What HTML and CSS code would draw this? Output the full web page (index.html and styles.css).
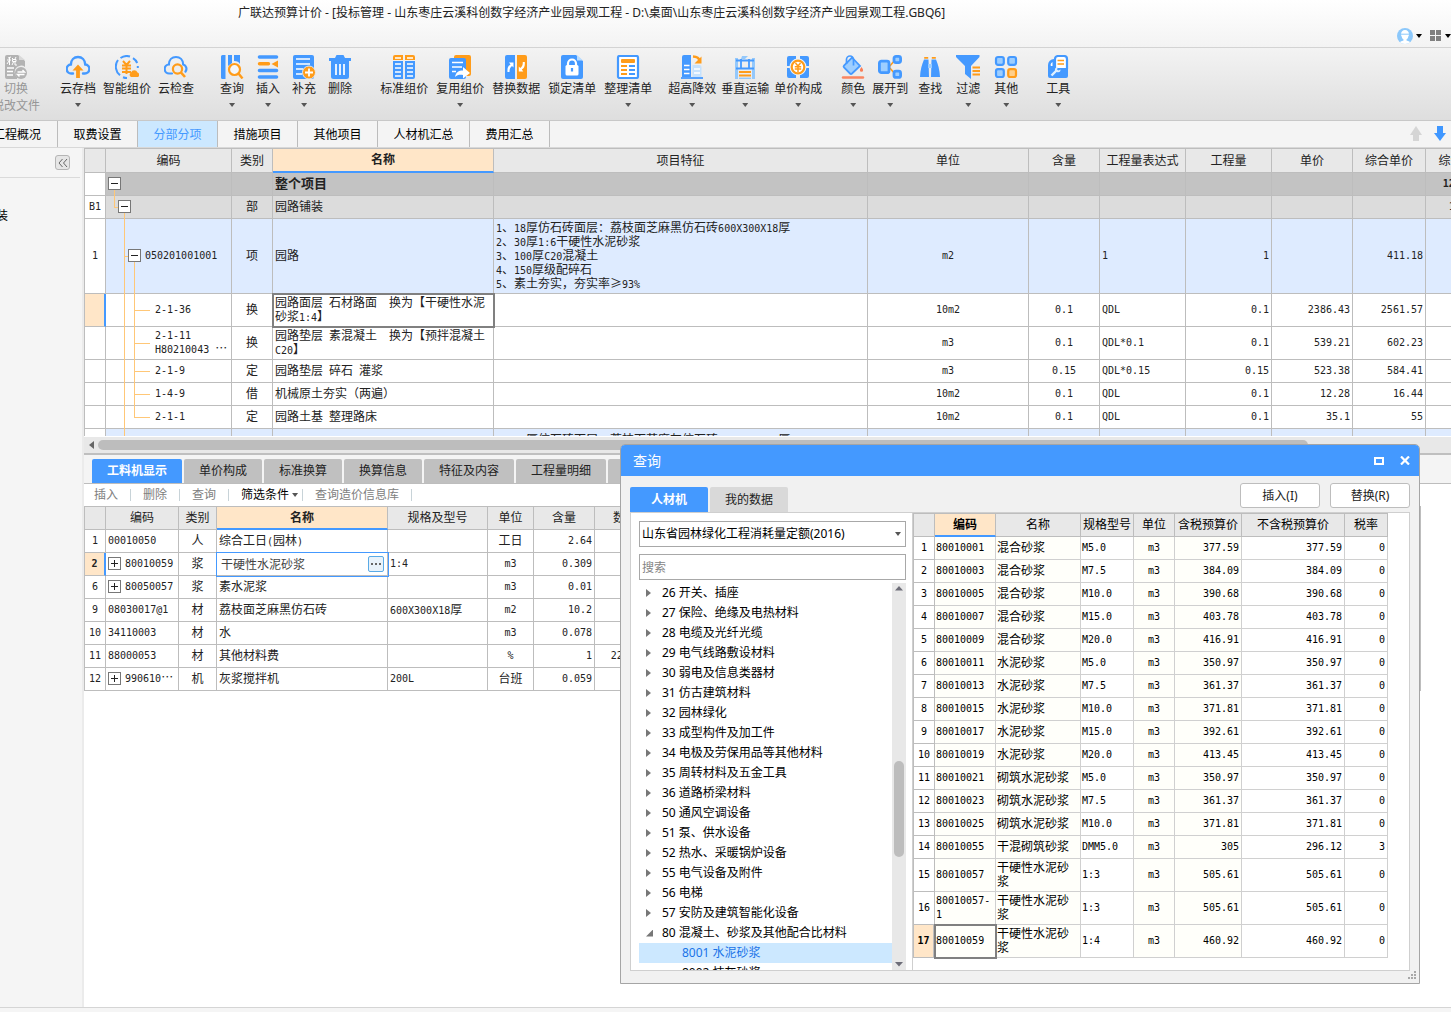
FILE: index.html
```html
<!DOCTYPE html>
<html lang="zh-CN">
<head>
<meta charset="utf-8">
<title>广联达预算计价</title>
<link rel="stylesheet" href="styles.css">
</head>
<body>
<div class="app">
  <header class="titlebar">
    <h1 class="app-title">广联达预算计价 - [投标管理 - 山东枣庄云溪科创数字经济产业园景观工程 - D:\桌面\山东枣庄云溪科创数字经济产业园景观工程.GBQ6]</h1>
    <div class="title-tools">
      <button class="bare" aria-label="用户"><svg width="16" height="16" viewBox="0 0 16 16"><defs><clipPath id="av"><circle cx="8" cy="8" r="8"/></clipPath></defs><g clip-path="url(#av)"><rect width="16" height="16" fill="#8cc8fb"/><path d="M4 6.500c0-3 1.600-4.500 4-4.500s4 1.500 4 4.500c0 1-.6 1.500-.8 2.500-.4 1.500-1.200 2-1.700 2.500v1c2 .5 4 1 4.500 3.500H2c.5-2.500 2.500-3 4.500-3.500v-1C6 11 5.200 10.500 4.800 9 4.600 8 4 7.500 4 6.500z" fill="#fff"/><path d="M4 6.200h8" stroke="#8cc8fb" stroke-width="1"/></g></svg></button>
      <i class="caret dark"></i>
      <button class="bare grid-btn" aria-label="布局"><svg width="12" height="12" viewBox="0 0 12 12" fill="#808080"><path d="M0 0h5v5H0zM6 0h5v5H6zM0 6h5v5H0zM6 6h5v5H6z"/></svg></button>
      <i class="caret dark"></i>
    </div>
  </header>

  <div class="ribbon">
    <div class="group first">
      <button class="tool off"><svg viewBox="0 0 24 24"><path d="M3 0h11l7 6v6a6 6 0 0 0-8 10v2H3a2 2 0 0 1-2-2V2a2 2 0 0 1 2-2z" fill="#b3b3b3"/><path d="M15 0l6 5h-6z" fill="#d9d9d9"/><path d="M4 3l3-1M3 5h4M5.500 3v7M5 6l-2 3M8 3l1 1M12 2l-1 2M8.500 4.500h3.500v2H8.500zM9.500 7l-1.500 3M11 7v3h2" fill="none" stroke="#fff"/><path d="M3 13h7M3 16.500h6M3 20h6" stroke="#fff" stroke-width="1.500"/><circle cx="17" cy="18" r="6" fill="#b3b3b3"/><path d="M13.500 17h7l-2-2M20.500 19.500h-7l2 2" stroke="#fff" stroke-width="1.400" fill="none"/></svg><span>切换<br>税改文件</span></button>
    </div>
    <div class="group g-a">
      <button class="tool"><svg viewBox="0 0 24 24"><path d="M7 18.500H5.500a4.500 4.500 0 0 1-.6-9C5 5 8 2 12 2s7 3 7.200 7.500a4.500 4.500 0 0 1-.7 9H17" fill="none" stroke="#4499ff" stroke-width="2.400" stroke-linecap="round"/><path d="M12 9.500l5.500 6h-3.600V23h-3.800v-7.500H6.500z" fill="#ff9c1a"/></svg><span>云存档</span><i class="caret"></i></button>
      <button class="tool"><svg viewBox="0 0 24 24"><path d="M5 20.200A11 11 0 0 1 3 5M5.500 3A11 11 0 0 1 15 1.500M18 3.200A11 11 0 0 1 22.200 8M22.800 11v2M8 22.200a11 11 0 0 0 4 .8" fill="none" stroke="#4499ff" stroke-width="2"/><path d="M8 6l3.500 4L15 6M7 10.500h9M7 13.500h9M7 17h9M11.500 10v9" fill="none" stroke="#ff9c1a" stroke-width="2"/><path d="M16 22a2.500 2.500 0 0 1 0-4.500 3.500 3.500 0 0 1 6.500 0A2.500 2.500 0 0 1 23 22z" fill="#ff9c1a"/></svg><span>智能组价</span></button>
      <button class="tool"><svg viewBox="0 0 24 24"><path d="M8 18.500H5.500a4.500 4.500 0 0 1-.6-9C5 5 8 2 12 2s7 3 7.200 7.500a4.500 4.500 0 0 1 2.300 7" fill="none" stroke="#4499ff" stroke-width="2.200" stroke-linecap="round"/><circle cx="13.500" cy="14" r="4.600" fill="none" stroke="#ff9c1a" stroke-width="2.200"/><path d="M17 17.500l4 4.500" stroke="#ff9c1a" stroke-width="2.600"/></svg><span>云检查</span></button>
    </div>
    <div class="group g-b">
      <button class="tool"><svg viewBox="0 0 24 24"><path d="M1 1.500A1.500 1.500 0 0 1 2.500 0h3v24h-3A1.500 1.500 0 0 1 1 22.500zM8 0h4v8l-4 3zM14 0h6v9c-1-2-3-3-6-3z" fill="#4499ff"/><circle cx="14.500" cy="14.500" r="5.500" fill="#f4f7fb" stroke="#ff9c1a" stroke-width="2.200"/><path d="M18.500 18.500l4 5" stroke="#ff9c1a" stroke-width="2.400"/></svg><span>查询</span><i class="caret"></i></button>
      <button class="tool"><svg viewBox="0 0 24 24"><path d="M3.500 2h17M3.500 15.500h17M3.500 22h17" stroke="#4499ff" stroke-width="3.600" stroke-linecap="round"/><path d="M3.500 8.800h9" stroke="#ff9c1a" stroke-width="3.400" stroke-linecap="round"/><path d="M22 5.500v7L15.500 9z" fill="#ff9c1a"/></svg><span>插入</span><i class="caret"></i></button>
      <button class="tool"><svg viewBox="0 0 24 24"><rect x="1" width="21" height="24" rx="2" fill="#4499ff"/><path d="M4 4h14M4 9h14M4 14h7M4 19h6" stroke="#fff" stroke-width="1.600"/><circle cx="17" cy="17.500" r="6.500" fill="#ff9c1a" stroke="#e9e9e9"/><path d="M17 13.500v8M13 17.500h8" stroke="#fff" stroke-width="1.800"/></svg><span>补充</span><i class="caret"></i></button>
      <button class="tool"><svg viewBox="0 0 24 24"><path d="M1 3h6l1.500-3h7L17 3h6v3H1z" fill="#4499ff"/><path d="M3 6h18v15.500a2.500 2.500 0 0 1-2.500 2.500h-13A2.500 2.500 0 0 1 3 21.500z" fill="#4499ff"/><path d="M8 9v11M12 9v11M16 9v11" stroke="#fff" stroke-width="1.700"/></svg><span>删除</span></button>
    </div>
    <div class="group g-c">
      <button class="tool"><svg viewBox="0 0 24 24"><path d="M1 6h10v18H3a2 2 0 0 1-2-2zM13 6h10v16a2 2 0 0 1-2 2h-8z" fill="#4499ff"/><path d="M3 0h8v5H1V2a2 2 0 0 1 2-2zM13 0h8a2 2 0 0 1 2 2v3H13z" fill="#ff9c1a"/><path d="M3 3h6M15 3h6M3 9h6M15 9h6M3 13h6M15 13h6M3 17h6M15 17h6M3 21h6M15 21h6" stroke="#fff" stroke-width="1.600"/></svg><span>标准组价</span></button>
      <button class="tool"><svg viewBox="0 0 24 24"><rect x="6" width="17" height="21" rx="2" fill="#ff9c1a"/><rect x="1" y="3" width="17" height="21" rx="2" fill="#4499ff"/><path d="M4 7.500h11M4 12h10M4 16.500h4" stroke="#fff" stroke-width="1.600"/><path d="M7 22c1-5 3.500-6.500 8-6.500V12l7 6-7 5.500V20c-3.500-.4-6 0-8 2z" fill="#fff"/></svg><span>复用组价</span><i class="caret"></i></button>
      <button class="tool"><svg viewBox="0 0 24 24"><path d="M3 0h8v24H3a2 2 0 0 1-2-2V2a2 2 0 0 1 2-2z" fill="#4499ff"/><path d="M13 0h8a2 2 0 0 1 2 2v20a2 2 0 0 1-2 2h-8z" fill="#ff9c1a"/><path d="M3.500 17c-.3-4 .5-6 3-7.500L5 7.500h4.500v5L8 11c-2 1.500-2.500 3-2.500 6zM20.800 7c.3 4-.5 6-3 7.500l1.500 2h-4.500v-5l1.500 1.500c2-1.500 2.500-3 2.500-6z" fill="#fff"/></svg><span>替换数据</span></button>
      <button class="tool"><svg viewBox="0 0 24 24"><path d="M3 0h13l7 6v16a2 2 0 0 1-2 2H3a2 2 0 0 1-2-2V2a2 2 0 0 1 2-2z" fill="#4499ff"/><path d="M17 0l6 5.500h-6z" fill="#b9dcff"/><path d="M8 11V8.500a4 4 0 0 1 8 0V11" fill="none" stroke="#fff" stroke-width="2.200"/><rect x="5.500" y="10" width="13" height="10.500" rx="1.500" fill="#fff"/><path d="M12 13v3.500" stroke="#4499ff" stroke-width="2.200"/></svg><span>锁定清单</span></button>
      <button class="tool"><svg viewBox="0 0 24 24"><rect x="2" y="1" width="20" height="22" rx="1.500" fill="#fff" stroke="#4499ff" stroke-width="2.200"/><rect x="5" y="4" width="14" height="4" rx="1" fill="#ff9c1a"/><path d="M5 11h6M5 15h6M5 19h6" stroke="#ff9c1a" stroke-width="2"/><path d="M13 11h6M13 15h6M13 19h6" stroke="#4499ff" stroke-width="2"/></svg><span>整理清单</span><i class="caret"></i></button>
    </div>
    <div class="group g-d">
      <button class="tool"><svg viewBox="0 0 24 24"><path d="M2 2a2 2 0 0 1 2-2h7v22H2z" fill="#4499ff"/><path d="M4 10.500h5.500M4 14.500h5.500M4 18.500h5.500" stroke="#fff" stroke-width="1.500"/><path d="M12.500 10h7a2 2 0 0 1 2 2v10h-9z" fill="#c6e2fd"/><path d="M14 14h6M14 18h6" stroke="#fff" stroke-width="1.300"/><path d="M1 23h22" stroke="#4499ff" stroke-width="1.800"/><path d="M13 1.500c4 .2 6 1.500 6.500 4" fill="none" stroke="#ff9c1a" stroke-width="2.600"/><path d="M21.500 1.500V8.500H14.500z" fill="#ff9c1a"/></svg><span>超高降效</span><i class="caret"></i></button>
      <button class="tool"><svg viewBox="0 0 24 24"><path d="M3.500 3v21M20.500 3v21" stroke="#94c8fb" stroke-width="3"/><path d="M3 5.500h18M3 13.500h18M8 4v10M16 4v10" stroke="#4499ff" stroke-width="1.800" fill="none"/><path d="M8 4l1-3 6 0-3 3z" fill="#94c8fb"/><path d="M6 17h12M6 20.500h12" stroke="#ff9c1a" stroke-width="2"/><path d="M6 23.300h12" stroke="#94c8fb" stroke-width="1.400"/></svg><span>垂直运输</span><i class="caret"></i></button>
      <button class="tool"><svg viewBox="0 0 24 24"><path d="M3 1h7v10H1V3a2 2 0 0 1 2-2zM14 1h7a2 2 0 0 1 2 2v8h-9zM1 13h9v10H3a2 2 0 0 1-2-2zM14 13h9v8a2 2 0 0 1-2 2h-7z" fill="#4499ff"/><circle cx="12" cy="12" r="8.500" fill="#e9f3fd"/><circle cx="12" cy="12" r="6.300" fill="#fff" stroke="#ff9c1a" stroke-width="2.200"/><path d="M9.500 8l2.500 3 2.500-3M8.800 11.700h6.400M8.800 14h6.400M12 11v6" fill="none" stroke="#ff9c1a" stroke-width="1.500"/></svg><span>单价构成</span><i class="caret"></i></button>
    </div>
    <div class="group g-e">
      <button class="tool"><svg viewBox="0 0 24 24"><path d="M11 2.500l8 8.500-8 7.500a1.500 1.500 0 0 1-2 0l-6-6a1.500 1.500 0 0 1 0-2z" fill="#9dceff" stroke="#4499ff" stroke-width="1.800"/><path d="M5.500 9V4.500a3.500 3.500 0 0 1 7 0v6" fill="none" stroke="#4499ff" stroke-width="1.700"/><path d="M20.500 12c1.300 2 1.600 2.600 1.600 3.200a1.600 1.600 0 0 1-3.200 0c0-.6.300-1.200 1.600-3.200z" fill="#fa7d55"/><path d="M2 22.500h20" stroke="#fa8560" stroke-width="2.400" stroke-linecap="round"/></svg><span>颜色</span><i class="caret"></i></button>
      <button class="tool"><svg viewBox="0 0 24 24"><path d="M11 12l6-7M11 12l6 7" stroke="#ff9c1a" stroke-width="1.600"/><g fill="#9dceff" stroke="#4499ff" stroke-width="2.800"><rect x="1.400" y="6.200" width="9.600" height="11.500" rx="2"/><rect x="16" y="1.400" width="6.600" height="6.200" rx="2"/><rect x="16" y="16.200" width="6.600" height="6.200" rx="2"/></g></svg><span>展开到</span><i class="caret"></i></button>
    </div>
    <div class="group g-f">
      <button class="tool"><svg viewBox="0 0 24 24"><path d="M6 4.500h4.500L11 22H2C2.300 15 4 9 6 4.500zM18 4.500h-4.500L13 22h9c-.3-7-2-13-4-17.500z" fill="#4499ff"/><path d="M10 9h4v4h-4z" fill="#9dceff"/><path d="M6.200 2.800h4M13.800 2.800h4" stroke="#ff9c1a" stroke-width="1.800"/></svg><span>查找</span></button>
      <button class="tool"><svg viewBox="0 0 24 24"><path d="M0 0h23.500v2l-8.500 9v13l-6-5v-8L0 2z" fill="#4499ff"/><path d="M16.500 12.500H24M16.500 16H24M16.500 19.500H24" stroke="#ff9c1a" stroke-width="1.800"/></svg><span>过滤</span><i class="caret"></i></button>
      <button class="tool"><svg viewBox="0 0 24 24"><g fill="#9dceff" stroke="#4499ff" stroke-width="2.200"><rect x="2" y="2" width="7.800" height="7.800" rx="2"/><rect x="14.200" y="2" width="7.800" height="7.800" rx="2"/><rect x="2" y="14.200" width="7.800" height="7.800" rx="2"/></g><rect x="14.200" y="14.200" width="7.800" height="7.800" rx="2" fill="#ffcf8a" stroke="#ff9c1a" stroke-width="2.200"/></svg><span>其他</span><i class="caret"></i></button>
    </div>
    <div class="group g-g">
      <button class="tool"><svg viewBox="0 0 24 24"><path d="M9 13V4a3 3 0 0 1 3-3h6a3 3 0 0 1 3 3v10" fill="#fff" stroke="#4499ff" stroke-width="2.200"/><path d="M2 21V10a6 6 0 0 1 6-6v9h14v8a2 2 0 0 1-2 2H4a2 2 0 0 1-2-2z" fill="#4499ff"/><path d="M4.500 10a4 4 0 0 1 2-3v4H5z" fill="#fff"/><path d="M11.500 5.500h6.500M11.500 9h6.500" stroke="#ff9c1a" stroke-width="1.700"/><path d="M5.500 20.500l5-5" stroke="#dff0ff" stroke-width="2.400"/><path d="M9 16c-.5-3 1-4 3-4l-1 2.500 1.500 1 2-1c.3 2.500-2 4-5.500 1.500z" fill="#dff0ff"/></svg><span>工具</span><i class="caret"></i></button>
    </div>
  </div>

  <nav class="page-tabs">
    <a href="#" class="cut">工程概况</a><a href="#">取费设置</a><a href="#" class="on">分部分项</a><a href="#">措施项目</a><a href="#">其他项目</a><a href="#" class="wide">人材机汇总</a><a href="#">费用汇总</a>
    <div class="move">
      <button class="bare" aria-label="上移"><svg width="12" height="16" viewBox="0 0 12 16"><path d="M6 0l6 9H9v6H3V9H0z" fill="#d5d5d5"/></svg></button>
      <button class="bare" aria-label="下移"><svg width="12" height="16" viewBox="0 0 12 16"><path d="M6 15l6-8H9V0H3v7H0z" fill="#3f97ff"/></svg></button>
    </div>
  </nav>

  <main class="work">
    <aside class="side">
      <div class="side-head"><button class="collapse" aria-label="收起"><svg width="10" height="8" viewBox="0 0 10 8"><path d="M4.500 0L1 4l3.500 4M9 0L5.500 4 9 8" fill="none" stroke="#666"/></svg></button></div>
      <div class="side-item"><span>园路铺装</span></div>
    </aside>

    <section class="panes">
      <div class="main-pane">
        <table class="grid main-grid">
          <colgroup><col class="w21"><col class="w126"><col class="w41"><col class="w221"><col class="w374"><col class="w161"><col class="w71"><col class="w86"><col class="w86"><col class="w81"><col class="w73"><col class="w74"></colgroup>
          <thead><tr><th></th><th>编码</th><th>类别</th><th class="cur">名称</th><th>项目特征</th><th>单位</th><th>含量</th><th>工程量表达式</th><th>工程量</th><th>单价</th><th>综合单价</th><th>综合合价</th></tr></thead>
          <tbody>
            <tr class="root"><td class="no"></td><td class="tree"><button class="box minus b1" aria-label="折叠"></button><i class="v x1 low"></i></td><td></td><td class="big">整个项目</td><td></td><td></td><td></td><td></td><td></td><td></td><td></td><td class="r n strong">120358.36</td></tr>
            <tr class="part"><td class="no n">B1</td><td class="tree"><i class="v x1 up"></i><i class="h x1"></i><button class="box minus b2" aria-label="折叠"></button><i class="v x2 low"></i></td><td class="c">部</td><td>园路铺装</td><td></td><td></td><td></td><td></td><td></td><td></td><td></td><td class="r n">14062.58</td></tr>
            <tr class="item tall"><td class="no n">1</td><td class="tree n t3"><i class="v x2"></i><i class="h x2"></i><button class="box minus b3" aria-label="折叠"></button><i class="v x3 low"></i>050201001001</td><td class="c">项</td><td>园路</td><td><span class="n">1</span>、<span class="n">18</span>厚仿石砖面层：荔枝面芝麻黑仿石砖<span class="n">600X300X18</span>厚<br><span class="n">2</span>、<span class="n">30</span>厚<span class="n">1:6</span>干硬性水泥砂浆<br><span class="n">3</span>、<span class="n">100</span>厚<span class="n">C20</span>混凝土<br><span class="n">4</span>、<span class="n">150</span>厚级配碎石<br><span class="n">5</span>、素土夯实，夯实率≥<span class="n">93%</span></td><td class="c n">m2</td><td></td><td class="n">1</td><td class="r n">1</td><td></td><td class="r n">411.18</td><td></td></tr>
            <tr class="two"><td class="no pick"></td><td class="tree n t4"><i class="v x2"></i><i class="v x3"></i><i class="h x3"></i>2-1-36</td><td class="c">换</td><td class="focus">园路面层<span class="n"> </span>石材路面<span class="n">&nbsp; </span>换为【干硬性水泥砂浆<span class="n">1:4</span>】</td><td></td><td class="c n">10m2</td><td class="c n">0.1</td><td class="n">QDL</td><td class="r n">0.1</td><td class="r n">2386.43</td><td class="r n">2561.57</td><td></td></tr>
            <tr class="two"><td class="no"></td><td class="tree n t4"><i class="v x2"></i><i class="v x3"></i><i class="h x3"></i>2-1-11<br>H80210043 <span class="z">…</span></td><td class="c">换</td><td>园路垫层<span class="n"> </span>素混凝土<span class="n">&nbsp; </span>换为【预拌混凝土<span class="n">C20</span>】</td><td></td><td class="c n">m3</td><td class="c n">0.1</td><td class="n">QDL*0.1</td><td class="r n">0.1</td><td class="r n">539.21</td><td class="r n">602.23</td><td></td></tr>
            <tr><td class="no"></td><td class="tree n t4"><i class="v x2"></i><i class="v x3"></i><i class="h x3"></i>2-1-9</td><td class="c">定</td><td>园路垫层<span class="n"> </span>碎石<span class="n"> </span>灌浆</td><td></td><td class="c n">m3</td><td class="c n">0.15</td><td class="n">QDL*0.15</td><td class="r n">0.15</td><td class="r n">523.38</td><td class="r n">584.41</td><td></td></tr>
            <tr><td class="no"></td><td class="tree n t4"><i class="v x2"></i><i class="v x3"></i><i class="h x3"></i>1-4-9</td><td class="c">借</td><td>机械原土夯实（两遍）</td><td></td><td class="c n">10m2</td><td class="c n">0.1</td><td class="n">QDL</td><td class="r n">0.1</td><td class="r n">12.28</td><td class="r n">16.44</td><td></td></tr>
            <tr><td class="no"></td><td class="tree n t4"><i class="v x2"></i><i class="v x3 up"></i><i class="h x3"></i>2-1-1</td><td class="c">定</td><td>园路土基<span class="n"> </span>整理路床</td><td></td><td class="c n">10m2</td><td class="c n">0.1</td><td class="n">QDL</td><td class="r n">0.1</td><td class="r n">35.1</td><td class="r n">55</td><td></td></tr>
            <tr class="item"><td class="no"></td><td class="tree"><i class="v x2"></i></td><td></td><td></td><td class="top"><span class="n">1</span>、<span class="n">18</span>厚仿石砖面层：荔枝面芝麻灰仿石砖<span class="n">600X300X18</span>厚</td><td></td><td></td><td></td><td></td><td></td><td></td><td></td></tr>
          </tbody>
        </table>
      </div>
      <div class="hbar"><svg width="7" height="8" viewBox="0 0 7 8"><path d="M6 0v8L1 4z" fill="#666"/></svg><div class="hthumb"></div></div>

      <div class="detail-tabs"><button class="on five">工料机显示</button><button>单价构成</button><button>标准换算</button><button>换算信息</button><button class="five">特征及内容</button><button class="five">工程量明细</button><button class="five"></button></div>
      <div class="detail-tools"><button disabled>插入</button><i></i><button disabled>删除</button><i></i><button disabled>查询</button><i></i><button class="ready">筛选条件<b class="caret"></b></button><i class="near"></i><button disabled>查询造价信息库</button><i></i></div>

      <div class="detail-pane">
        <table class="grid detail-grid">
          <colgroup><col class="w21"><col class="w73"><col class="w38"><col class="w171"><col class="w100"><col class="w46"><col class="w61"><col class="w61"><col></colgroup>
          <thead><tr><th></th><th>编码</th><th>类别</th><th class="cur">名称</th><th>规格及型号</th><th>单位</th><th>含量</th><th>数量</th><th></th></tr></thead>
          <tbody>
            <tr><td class="no n">1</td><td class="n">00010050</td><td class="c">人</td><td>综合工日<span class="n">(</span>园林<span class="n">)</span></td><td></td><td class="c">工日</td><td class="r n">2.64</td><td></td><td></td></tr>
            <tr><td class="no n pick">2</td><td class="tree n t2"><button class="box plus b1" aria-label="展开"></button>80010059</td><td class="c">浆</td><td class="edit"><div class="editor"><input type="text" value="干硬性水泥砂浆" aria-label="名称"><button aria-label="更多"><i></i><i></i><i></i></button></div></td><td class="n">1:4</td><td class="c n">m3</td><td class="r n">0.309</td><td></td><td></td></tr>
            <tr><td class="no n">6</td><td class="tree n t2"><button class="box plus b1" aria-label="展开"></button>80050057</td><td class="c">浆</td><td>素水泥浆</td><td></td><td class="c n">m3</td><td class="r n">0.01</td><td></td><td></td></tr>
            <tr><td class="no n">9</td><td class="n">08030017@1</td><td class="c">材</td><td>荔枝面芝麻黑仿石砖</td><td><span class="n">600X300X18</span>厚</td><td class="c n">m2</td><td class="r n">10.2</td><td></td><td></td></tr>
            <tr><td class="no n">10</td><td class="n">34110003</td><td class="c">材</td><td>水</td><td></td><td class="c n">m3</td><td class="r n">0.078</td><td></td><td></td></tr>
            <tr><td class="no n">11</td><td class="n">88000053</td><td class="c">材</td><td>其他材料费</td><td></td><td class="c n">%</td><td class="r n">1</td><td class="r n">22.6953</td><td></td></tr>
            <tr><td class="no n">12</td><td class="tree n t2"><button class="box plus b1" aria-label="展开"></button>990610<span class="z">…</span></td><td class="c">机</td><td>灰浆搅拌机</td><td class="n">200L</td><td class="c">台班</td><td class="r n">0.059</td><td></td><td></td></tr>
          </tbody>
        </table>
      </div>
    </section>
  </main>
  <footer class="status"></footer>
</div>

<div class="dialog" role="dialog" aria-label="查询">
  <div class="dialog-bar"><h2>查询</h2>
    <button class="bare" aria-label="最大化"><svg width="10" height="8" viewBox="0 0 10 8"><path d="M1 1h8v6H1z" fill="none" stroke="#fff" stroke-width="2"/></svg></button>
    <button class="bare" aria-label="关闭"><svg width="10" height="9" viewBox="0 0 10 9"><path d="M1 .5l8 8M9 .5l-8 8" stroke="#fff" stroke-width="2.200"/></svg></button>
  </div>
  <div class="dialog-body">
    <div class="dialog-top">
      <div class="dialog-tabs"><button class="on">人材机</button><button>我的数据</button></div>
      <div class="actions"><button>插入(I)</button><button>替换(R)</button></div>
    </div>
    <div class="dialog-panel">
      <div class="finder">
        <div class="pick-list"><select aria-label="定额库"><option>山东省园林绿化工程消耗量定额(2016)</option></select><i class="caret"></i></div>
        <input class="search" type="text" placeholder="搜索" aria-label="搜索">
        <div class="tree-box">
          <ul class="cats">
            <li>26 开关、插座</li><li>27 保险、绝缘及电热材料</li><li>28 电缆及光纤光缆</li><li>29 电气线路敷设材料</li><li>30 弱电及信息类器材</li><li>31 仿古建筑材料</li><li>32 园林绿化</li><li>33 成型构件及加工件</li><li>34 电极及劳保用品等其他材料</li><li>35 周转材料及五金工具</li><li>36 道路桥梁材料</li><li>50 通风空调设备</li><li>51 泵、供水设备</li><li>52 热水、采暖锅炉设备</li><li>55 电气设备及附件</li><li>56 电梯</li><li>57 安防及建筑智能化设备</li><li class="open">80 混凝土、砂浆及其他配合比材料</li><li class="leaf sel">8001 水泥砂浆</li><li class="leaf">8002 抹灰砂浆</li>
          </ul>
          <div class="vbar"><svg width="8" height="5" viewBox="0 0 8 5"><path d="M4 0l4 4.500H0z" fill="#6d6d78"/></svg><div class="vthumb"></div><svg width="8" height="5" viewBox="0 0 8 5"><path d="M4 4.500L8 0H0z" fill="#6d6d78"/></svg></div>
        </div>
      </div>
      <div class="results">
        <table class="grid result-grid">
          <colgroup><col class="w21"><col class="w61"><col class="w85"><col class="w53"><col class="w41"><col class="w67"><col class="w103"><col class="w43"></colgroup>
          <thead><tr><th></th><th class="cur">编码</th><th>名称</th><th>规格型号</th><th>单位</th><th>含税预算价</th><th>不含税预算价</th><th>税率</th></tr></thead>
          <tbody class="n">
            <tr><td>1</td><td>80010001</td><td>混合砂浆</td><td>M5.0</td><td>m3</td><td>377.59</td><td>377.59</td><td>0</td></tr>
            <tr><td>2</td><td>80010003</td><td>混合砂浆</td><td>M7.5</td><td>m3</td><td>384.09</td><td>384.09</td><td>0</td></tr>
            <tr><td>3</td><td>80010005</td><td>混合砂浆</td><td>M10.0</td><td>m3</td><td>390.68</td><td>390.68</td><td>0</td></tr>
            <tr><td>4</td><td>80010007</td><td>混合砂浆</td><td>M15.0</td><td>m3</td><td>403.78</td><td>403.78</td><td>0</td></tr>
            <tr><td>5</td><td>80010009</td><td>混合砂浆</td><td>M20.0</td><td>m3</td><td>416.91</td><td>416.91</td><td>0</td></tr>
            <tr><td>6</td><td>80010011</td><td>水泥砂浆</td><td>M5.0</td><td>m3</td><td>350.97</td><td>350.97</td><td>0</td></tr>
            <tr><td>7</td><td>80010013</td><td>水泥砂浆</td><td>M7.5</td><td>m3</td><td>361.37</td><td>361.37</td><td>0</td></tr>
            <tr><td>8</td><td>80010015</td><td>水泥砂浆</td><td>M10.0</td><td>m3</td><td>371.81</td><td>371.81</td><td>0</td></tr>
            <tr><td>9</td><td>80010017</td><td>水泥砂浆</td><td>M15.0</td><td>m3</td><td>392.61</td><td>392.61</td><td>0</td></tr>
            <tr><td>10</td><td>80010019</td><td>水泥砂浆</td><td>M20.0</td><td>m3</td><td>413.45</td><td>413.45</td><td>0</td></tr>
            <tr><td>11</td><td>80010021</td><td>砌筑水泥砂浆</td><td>M5.0</td><td>m3</td><td>350.97</td><td>350.97</td><td>0</td></tr>
            <tr><td>12</td><td>80010023</td><td>砌筑水泥砂浆</td><td>M7.5</td><td>m3</td><td>361.37</td><td>361.37</td><td>0</td></tr>
            <tr><td>13</td><td>80010025</td><td>砌筑水泥砂浆</td><td>M10.0</td><td>m3</td><td>371.81</td><td>371.81</td><td>0</td></tr>
            <tr><td>14</td><td>80010055</td><td>干混砌筑砂浆</td><td>DMM5.0</td><td>m3</td><td>305</td><td>296.12</td><td>3</td></tr>
            <tr class="two"><td>15</td><td>80010057</td><td>干硬性水泥砂浆</td><td>1:3</td><td>m3</td><td>505.61</td><td>505.61</td><td>0</td></tr>
            <tr class="two"><td>16</td><td>80010057-1</td><td>干硬性水泥砂浆</td><td>1:3</td><td>m3</td><td>505.61</td><td>505.61</td><td>0</td></tr>
            <tr class="two"><td class="pick">17</td><td class="focus">80010059</td><td>干硬性水泥砂浆</td><td>1:4</td><td>m3</td><td>460.92</td><td>460.92</td><td>0</td></tr>
          </tbody>
        </table>
      </div>
    </div>
  </div>
  <svg class="grip" width="9" height="9" viewBox="0 0 9 9" fill="#a8a8a8"><path d="M6 0h2v2H6zM3 3h2v2H3zM6 3h2v2H6zM0 6h2v2H0zM3 6h2v2H3zM6 6h2v2H6z"/></svg>
</div>
</body>
</html>
```
FILE: styles.css
```css
* { box-sizing: border-box; }
body {
  margin: 0;
  font: 12px/16px "Noto Sans", "Noto Sans CJK SC", sans-serif;
  color: #222;
  overflow: hidden;
}
button, input, select { font: inherit; color: inherit; margin: 0; }
button { border: 0; padding: 0; background: none; white-space: nowrap; }
.bare { display: flex; }
a { color: inherit; text-decoration: none; }

.app { display: flex; flex-direction: column; height: 100vh; background: #f5f5f5; }

/* window title */
.titlebar {
  height: 48px;
  flex: none;
  display: flex;
  flex-direction: column;
  justify-content: space-between;
  background: linear-gradient(#fff, #f3f3f3);
  border-bottom: 1px solid #d3d3d3;
}
.app-title { margin: 0; padding: 5px 0 0 238px; font-size: 12px; font-weight: 400; white-space: nowrap; }
.title-tools { display: flex; align-items: center; justify-content: flex-end; gap: 3px; height: 16px; margin-bottom: 3px; }
.grid-btn { margin-left: 5px; }
.caret { flex: none; width: 6px; height: 4px; background: #555; clip-path: polygon(0 0, 100% 0, 50% 100%); }
.caret.dark { background: #000; }

/* ribbon */
.ribbon {
  flex: none;
  height: 73px;
  display: flex;
  padding-top: 7px;
  overflow: hidden;
  background: linear-gradient(#f3f3f3, #dedede);
  border-bottom: 1px solid #c8c8c8;
}
.group { display: flex; flex: none; align-items: flex-start; }
.tool { display: flex; flex-direction: column; align-items: center; line-height: 17px; color: #222; }
.tool svg { width: 24px; height: 24px; }
.tool span { margin-top: 1px; }
.tool .caret { margin-top: 6px; }
.tool.off { color: #969696; }
.first { margin-left: -8px; }
.g-a { margin-left: 20px; gap: 7px; }
.g-b { margin-left: 26px; gap: 12px; }
.g-c { margin-left: 28px; gap: 8px; }
.g-d { margin-left: 16px; gap: 5px; }
.g-e { margin-left: 19px; gap: 7px; }
.g-f { margin-left: 10px; gap: 14px; }
.g-g { margin-left: 28px; }

/* page tabs */
.page-tabs { flex: none; display: flex; height: 27px; border-bottom: 1px solid #d8d8d8; background: #f4f4f4; }
.page-tabs a {
  width: 80px;
  line-height: 27px;
  text-align: center;
  border-right: 1px solid #bcbcbc;
  color: #000;
}
.page-tabs .wide { width: 92px; }
.page-tabs .cut { width: 81px; margin-left: -23px; }
.page-tabs .on { background: #cce8ff; color: #4499ff; }
.move { display: flex; gap: 12px; align-items: center; margin-left: auto; padding-right: 5px; }

/* work area */
.work { flex: 1; min-height: 0; display: flex; }
.side { flex: none; width: 84px; border-right: 2px solid #ebebeb; background: #f5f5f5; overflow: hidden; }
.side-head { display: flex; justify-content: flex-end; margin-right: 2px; padding: 7px 10px 7px 0; border-bottom: 1px solid #dadada; }
.collapse {
  display: flex;
  align-items: center;
  justify-content: center;
  width: 15px;
  height: 15px;
  border: 1px solid #b5b5b5;
  border-radius: 3px;
  background: #e6e6e6;
}
.side-item { display: flex; margin-left: -40px; padding-top: 30px; color: #000; }
.panes { flex: 1; min-width: 0; display: flex; flex-direction: column; background: #fff; }

/* data grids */
.grid { border-collapse: separate; border-spacing: 0; table-layout: fixed; border-top: 1px solid #bdbdbd; border-left: 1px solid #bdbdbd; font-family: "Noto Sans CJK SC", sans-serif; line-height: 14px; }
.grid th, .grid td { padding: 0 2px 2px; border-right: 1px solid #bdbdbd; border-bottom: 1px solid #bdbdbd; overflow: hidden; }
.grid th { background: #e8e8e8; font-weight: 400; white-space: nowrap; text-align: center; }
.grid th.cur { background: #ffe6c8; font-weight: 700; border-bottom: 2px solid #4499ff; }
.grid tr { height: 23px; }
.grid .two { height: 33px; }
.grid .tall { height: 75px; }
.n { font-family: "DejaVu Sans Mono", "Noto Sans CJK SC", monospace; font-size: 10px; }
.z { font-family: "Noto Sans CJK SC", sans-serif; font-size: 12px; }
span.n, span.z { line-height: 0; }
.grid td.n, .grid .n td { padding-bottom: 0; }
.grid td.c, .grid td.no { text-align: center; }
.grid td.r { text-align: right; }
.grid td.no { background: #fff; padding: 0; }
.grid td.pick { background: #ffe6c8; border-right: 2px solid #4499ff; font-weight: 700; }
.grid td.focus { outline: 2px solid #808080; outline-offset: -1px; }

.w21 { width: 21px; } .w38 { width: 38px; } .w41 { width: 41px; } .w43 { width: 43px; } .w46 { width: 46px; }
.w53 { width: 53px; } .w61 { width: 61px; } .w67 { width: 67px; } .w71 { width: 71px; } .w73 { width: 73px; }
.w74 { width: 74px; } .w81 { width: 81px; } .w85 { width: 85px; } .w86 { width: 86px; } .w100 { width: 100px; }
.w103 { width: 103px; } .w126 { width: 126px; } .w161 { width: 161px; } .w171 { width: 171px; }
.w221 { width: 221px; } .w374 { width: 374px; }

.main-pane { flex: none; height: 288px; overflow: hidden; }
.main-grid { width: 1416px; }
.main-grid thead tr { height: 24px; }
.main-grid .root td { background: #c3c3c3; }
.main-grid .part td { background: #dcdcdc; }
.main-grid .item td { background: #deebff; }
.main-grid tr td.no { background: #fff; }
.main-grid tr td.pick { background: #ffe6c8; }
.main-grid .big { font-size: 13px; font-weight: 700; }
.main-grid .strong { font-weight: 700; }
.main-grid .top { white-space: nowrap; }

/* outline tree inside the code column */
.grid td.tree { position: relative; overflow: visible; }
.grid td.t2 { padding-left: 19px; white-space: nowrap; }
.grid td.t3 { padding-left: 39px; }
.grid td.t4 { padding-left: 49px; }
.box { position: absolute; z-index: 1; top: calc(50% - 7px); width: 13px; height: 13px; border: 1px solid #777; background: #fff; }
.box::before, .box.plus::after { content: ""; position: absolute; left: 2px; top: 5px; width: 7px; height: 1px; background: #222; }
.box.plus::after { transform: rotate(90deg); }
.b1 { left: 2px; }
.b2 { left: 12px; }
.b3 { left: 22px; }
.v { position: absolute; top: 0; bottom: -1px; width: 1px; background: #ffc777; }
.v.low { top: 50%; }
.v.up { bottom: 50%; }
.h { position: absolute; top: 50%; width: 16px; height: 1px; background: #ffc777; }
.h.x1, .h.x2 { width: 5px; }
.x1 { left: 8px; }
.x2 { left: 18px; }
.x3 { left: 28px; }

.hbar { flex: none; display: flex; align-items: center; height: 18px; margin-top: 1px; padding: 0 143px 0 4px; gap: 3px; background: #e8e8e8; border-bottom: 2px solid #bfbfbf; }
.hthumb { flex: 1; height: 10px; border-radius: 5px; background: #bdbdbd; }

/* detail tabs */
.detail-tabs { flex: none; display: flex; gap: 2px; height: 29px; padding: 4px 0 0 8px; background: #f4f4f4; border-bottom: 1px solid #bdbdbd; }
.detail-tabs button { width: 78px; background: #c0c0c0; border-radius: 2px 2px 0 0; }
.detail-tabs .five { width: 90px; }
.detail-tabs .on { background: #4499ff; color: #fff; font-weight: 700; }
.detail-tools { flex: none; display: flex; align-items: center; gap: 12px; height: 22px; padding-left: 10px; }
.detail-tools button { color: #808080; }
.detail-tools button.ready { display: flex; align-items: center; gap: 3px; color: #000; }
.detail-tools i { width: 1px; height: 12px; background: #c8d3d8; }
.detail-tools i.near { margin-left: -8px; }
.detail-pane { flex: 1; min-height: 0; padding-right: 30px; }
.detail-grid { width: 100%; }
.grid td.edit { padding: 0; outline: 1px solid #4499ff; }
.editor { display: flex; align-items: center; height: 20px; padding: 0 3px 0 4px; }
.editor input { flex: 1; min-width: 0; border: 0; padding: 0; outline: 0; background: none; color: #444; }
.editor button { display: flex; gap: 2px; align-items: center; justify-content: center; width: 16px; height: 16px; border: 1px solid #5aaae6; border-radius: 2px; background: #e8f2fa; }
.editor button i { width: 2px; height: 2px; background: #666; }
.status { flex: none; height: 5px; border-top: 1px solid #d5d5d5; background: #f5f5f5; }

/* query dialog */
.dialog {
  position: absolute;
  left: 620px;
  top: 444px;
  width: 800px;
  height: 540px;
  display: flex;
  flex-direction: column;
  border: 1px solid #a5a5a5;
  border-radius: 5px 5px 0 0;
  background: #f1f1f1;
  overflow: hidden;
}
.dialog-bar { flex: none; display: flex; align-items: center; gap: 16px; height: 31px; padding: 0 9px 0 12px; background: #4499ff; }
.dialog-bar h2 { flex: 1; margin: 0; font-size: 14px; font-weight: 400; color: #fff; }
.dialog-body { flex: 1; min-height: 0; display: flex; flex-direction: column; padding: 7px 9px 12px; }
.dialog-top { display: flex; justify-content: space-between; align-items: flex-start; height: 29px; }
.dialog-tabs { display: flex; gap: 2px; padding-top: 4px; }
.dialog-tabs button { width: 78px; height: 25px; border-radius: 2px 2px 0 0; background: #d9d9d9; }
.dialog-tabs .on { background: #4499ff; color: #fff; font-weight: 700; }
.actions { display: flex; gap: 10px; }
.actions button { width: 80px; height: 25px; border: 1px solid #bdbdbd; border-radius: 3px; background: #fff; }
.dialog-panel { flex: 1; min-height: 0; display: flex; border: 1px solid #cfcfcf; background: #fff; }
.finder { flex: none; width: 282px; padding: 8px 6px 0 8px; display: flex; flex-direction: column; border-right: 1px solid #cfcfcf; }
.pick-list { display: flex; align-items: center; height: 26px; border: 1px solid #a8a8a8; padding-right: 4px; }
.pick-list select { flex: 1; min-width: 0; appearance: none; border: 0; padding: 0 2px; background: none; color: #000; }
.search { height: 26px; margin-top: 7px; padding: 0 2px; border: 1px solid #a8a8a8; }
.search::placeholder { color: #858585; }
.tree-box { flex: 1; min-height: 0; display: flex; margin-top: 3px; }
.cats { flex: 1; margin: 0; padding: 0; list-style: none; overflow: hidden; color: #000; }
.cats li { display: flex; align-items: center; height: 20px; padding-left: 7px; }
.cats li::before { content: ""; width: 5px; height: 8px; margin-right: 11px; background: #777; clip-path: polygon(0 0, 100% 50%, 0 100%); }
.cats li.open::before { width: 7px; height: 7px; margin-right: 9px; clip-path: polygon(100% 0, 100% 100%, 0 100%); }
.cats li.leaf { padding-left: 43px; }
.cats li.leaf::before { display: none; }
.cats li.sel { background: #cce8ff; color: #1a73e8; }
.vbar { flex: none; width: 14px; display: flex; flex-direction: column; align-items: center; justify-content: space-between; padding: 3px 0; background: #e8e8e8; }
.vthumb { width: 10px; height: 96px; margin-top: 162px; margin-bottom: 98px; border-radius: 5px; background: #bdbdbd; }
.results { flex: 1; min-width: 0; overflow: hidden; }
.result-grid { width: 475px; color: #000; }
.result-grid td { border-color: #d0d0d0; text-align: right; }
.result-grid td:nth-child(1), .result-grid td:nth-child(5) { text-align: center; }
.result-grid td:nth-child(1) { padding: 0; border-color: #bdbdbd; }
.result-grid td:nth-child(2), .result-grid td:nth-child(3), .result-grid td:nth-child(4) { text-align: left; padding: 0 1px; }
.result-grid td:nth-child(2), .result-grid td:nth-child(3), .result-grid td:nth-child(5), .result-grid td:nth-child(6) { background: #fffffa; }
.result-grid td:nth-child(3) { font: 12px/14px "Noto Sans CJK SC", sans-serif; padding-bottom: 2px; }
.grip { position: absolute; right: 2px; bottom: 3px; }
```
